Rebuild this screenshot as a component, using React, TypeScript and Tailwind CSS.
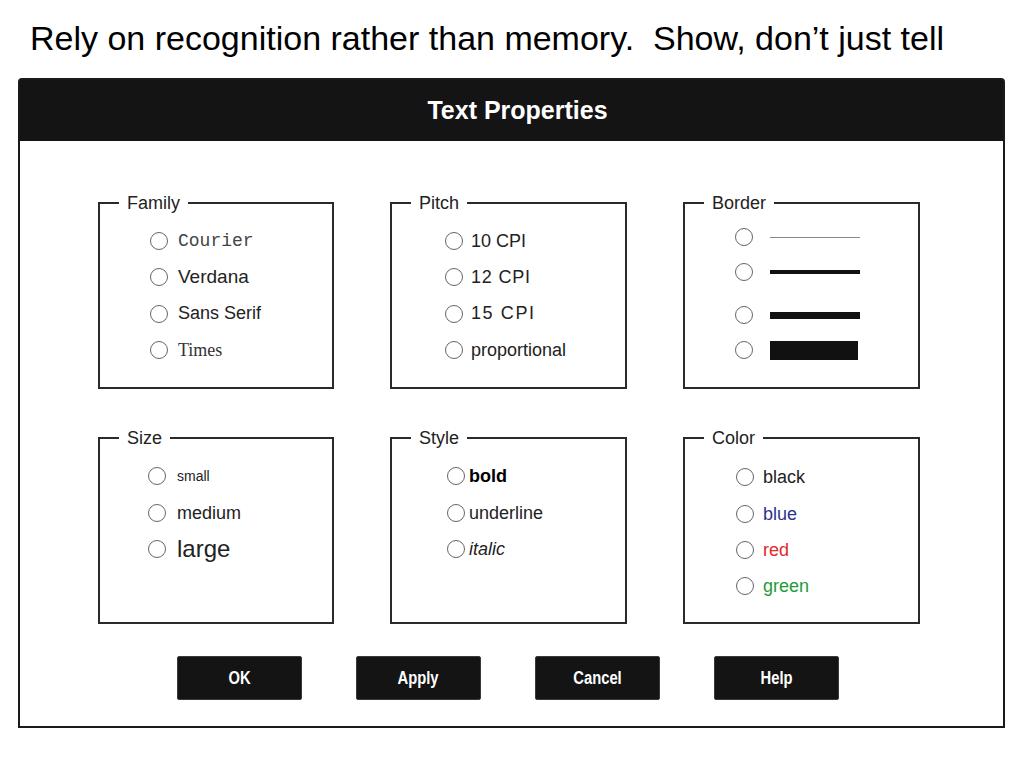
import React from "react";

const SANS = "font-['Liberation_Sans',Arial,sans-serif]";

function Radio() {
  return (
    <span className="block w-[18px] h-[18px] shrink-0 rounded-full border-[1.5px] border-[#666] bg-white" />
  );
}

type Row = { h: string; content: React.ReactNode };

function Group({
  label,
  pl,
  gap,
  pt,
  rows,
}: {
  label: string;
  pl: string;
  gap: string;
  pt: string;
  rows: Row[];
}) {
  return (
    <fieldset className="border-2 border-[#2a2a2a] min-w-0">
      <legend className={`ml-[19px] px-[8px] text-[18px] leading-[20px] text-[#222] ${SANS}`}>
        {label}
      </legend>
      <div className={`h-[174px] ${pt} ${pl}`}>
        {rows.map((r, i) => (
          <div key={i} className={`flex items-center ${gap} ${r.h}`}>
            <Radio />
            {r.content}
          </div>
        ))}
      </div>
    </fieldset>
  );
}

function Btn({ label }: { label: string }) {
  return (
    <div className="w-[125px] h-[44px] bg-[#141414] rounded-[2px] border border-[#3a3a3a] flex items-center justify-center">
      <span className={`inline-block scale-x-[0.82] text-white text-[18px] font-bold ${SANS}`}>{label}</span>
    </div>
  );
}

export default function App() {
  const t = `${SANS} text-[#222]`;
  return (
    <div className="w-[1024px] h-[768px] bg-white overflow-hidden">
      <div className={`pt-[21px] pl-[30px] text-[34px] leading-[34px] text-black ${SANS}`}>
        Rely on recognition rather than memory.&nbsp; Show, don’t just tell
      </div>
      <div className="ml-[18px] mt-[23px] w-[987px] h-[650px] border-2 border-[#1a1a1a] rounded-t-[4px] bg-white">
        <div className={`h-[61px] bg-[#141414] flex items-center justify-center pl-[12px] text-white text-[25px] font-bold ${SANS}`}>
          Text Properties
        </div>
        <div className="pt-[52px] pl-[78px]">
          <div className="grid grid-cols-[236px_237px_237px] gap-x-[56px] gap-y-[39px]">
            <Group
              label="Family"
              pl="pl-[50px]"
              gap="gap-[10px]"
              pt="pt-[10px]"
              rows={[
                { h: "h-[36px]", content: <span className="text-[18px] text-[#444] font-['Liberation_Mono',monospace]">Courier</span> },
                { h: "h-[36px]", content: <span className={`text-[19px] ${t}`}>Verdana</span> },
                { h: "h-[37px]", content: <span className={`text-[18px] ${t}`}>Sans Serif</span> },
                { h: "h-[36px]", content: <span className="text-[18px] text-[#333] font-['Liberation_Serif',serif]">Times</span> },
              ]}
            />
            <Group
              label="Pitch"
              pl="pl-[53px]"
              gap="gap-[8px]"
              pt="pt-[10px]"
              rows={[
                { h: "h-[36px]", content: <span className={`text-[18px] ${t}`}>10 CPI</span> },
                { h: "h-[36px]", content: <span className={`text-[18px] tracking-[0.8px] ${t}`}>12 CPI</span> },
                { h: "h-[37px]", content: <span className={`text-[18px] tracking-[1.6px] ${t}`}>15 CPI</span> },
                { h: "h-[36px]", content: <span className={`text-[18px] ${t}`}>proportional</span> },
              ]}
            />
            <Group
              label="Border"
              pl="pl-[50px]"
              gap="gap-[17px]"
              pt="pt-[7px]"
              rows={[
                { h: "h-[34px]", content: <span className="block w-[90px] h-[1px] bg-[#888]" /> },
                { h: "h-[36px]", content: <span className="block w-[90px] h-[4px] bg-[#111]" /> },
                { h: "h-[50px]", content: <span className="block w-[90px] h-[7px] bg-[#111]" /> },
                { h: "h-[20px]", content: <span className="block w-[88px] h-[19px] bg-[#111]" /> },
              ]}
            />
            <Group
              label="Size"
              pl="pl-[48px]"
              gap="gap-[11px]"
              pt="pt-[10px]"
              rows={[
                { h: "h-[36px]", content: <span className={`text-[14px] ${t}`}>small</span> },
                { h: "h-[38px]", content: <span className={`text-[18px] ${t}`}>medium</span> },
                { h: "h-[34px]", content: <span className={`text-[24px] ${t}`}>large</span> },
              ]}
            />
            <Group
              label="Style"
              pl="pl-[55px]"
              gap="gap-[4px]"
              pt="pt-[10px]"
              rows={[
                { h: "h-[36px]", content: <span className={`text-[18px] font-bold ${SANS} text-black`}>bold</span> },
                { h: "h-[38px]", content: <span className={`text-[18px] ${t}`}>underline</span> },
                { h: "h-[34px]", content: <span className={`text-[18px] italic ${t}`}>italic</span> },
              ]}
            />
            <Group
              label="Color"
              pl="pl-[51px]"
              gap="gap-[9px]"
              pt="pt-[10px]"
              rows={[
                { h: "h-[38px]", content: <span className={`text-[18px] ${t}`}>black</span> },
                { h: "h-[36px]", content: <span className={`text-[18px] ${SANS} text-[#2b3290]`}>blue</span> },
                { h: "h-[36px]", content: <span className={`text-[18px] ${SANS} text-[#e5262c]`}>red</span> },
                { h: "h-[36px]", content: <span className={`text-[18px] ${SANS} text-[#1f9b3a]`}>green</span> },
              ]}
            />
          </div>
          <div className="mt-[32px] pl-[79px] flex gap-[54px]">
            <Btn label="OK" />
            <Btn label="Apply" />
            <Btn label="Cancel" />
            <Btn label="Help" />
          </div>
        </div>
      </div>
    </div>
  );
}
